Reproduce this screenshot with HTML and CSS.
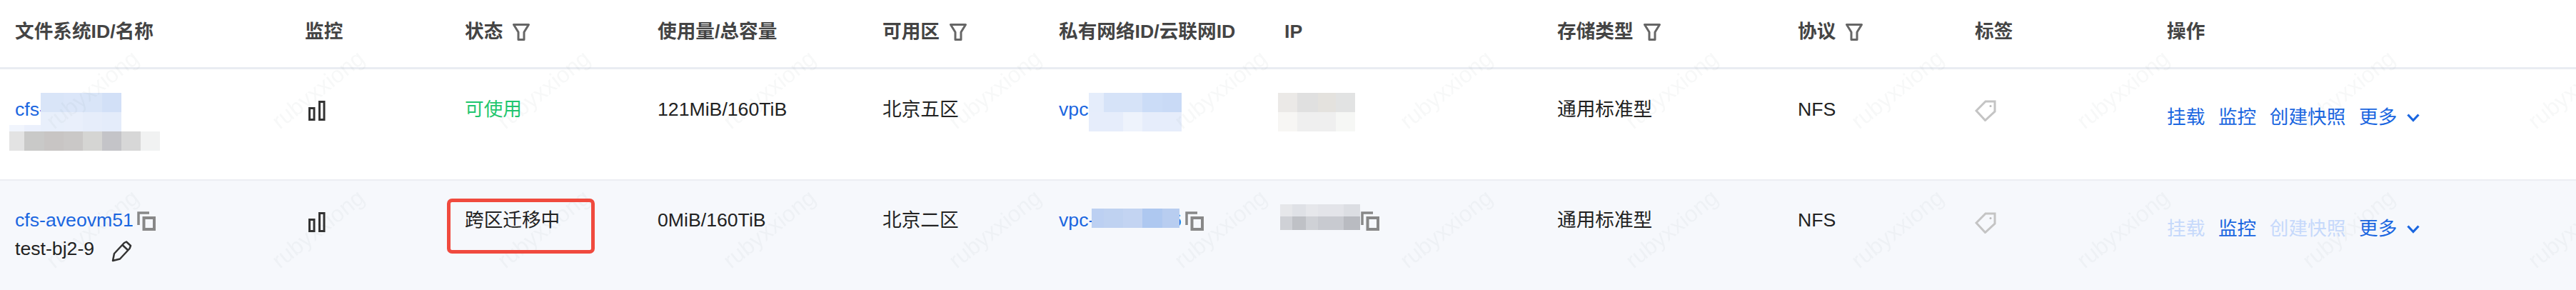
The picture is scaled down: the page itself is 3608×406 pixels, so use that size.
FILE: index.html
```html
<!DOCTYPE html>
<html lang="zh-CN">
<head>
<meta charset="utf-8">
<title>文件系统</title>
<link rel="stylesheet" href="styles.css">
</head>
<body>
<svg width="0" height="0" class="defs" aria-hidden="true">
  <defs>
    <symbol id="i-filter" viewBox="0 0 24 24"><path d="M1.5 1.5H22.5L16 12V22.5H8V12Z" fill="none" stroke="#666" stroke-width="3" stroke-linejoin="round"/></symbol>
    <symbol id="i-bars" viewBox="0 0 24 28"><rect x="1.5" y="10.5" width="6.5" height="16" fill="none" stroke="#333" stroke-width="3"/><rect x="15.5" y="1.5" width="6.5" height="25" fill="none" stroke="#333" stroke-width="3"/></symbol>
    <symbol id="i-copy" viewBox="0 0 26 27"><path d="M17 2H2V19" fill="none" stroke="#888" stroke-width="3.5"/><rect x="9.5" y="9" width="14.5" height="16" fill="none" stroke="#888" stroke-width="4"/></symbol>
    <symbol id="i-tag" viewBox="0 0 30 30"><path d="M15 2H28V16L14.500 28.500L2 15Z" fill="none" stroke="#c4c4c4" stroke-width="3" stroke-linejoin="miter"/><circle cx="22" cy="8.500" r="1.500" fill="#bbb"/></symbol>
    <symbol id="i-pencil" viewBox="0 0 29 30"><path d="M2 28L4 18L18 3L21 1.500L27 7L25.500 11L12 25.500Z M15.500 6L23.500 13.500" fill="none" stroke="#333" stroke-width="2.500" stroke-linejoin="round"/></symbol>
    <symbol id="i-chevron" viewBox="0 0 18 12"><path d="M1.500 1.500L9 9.500L16.500 1.500" fill="none" stroke="#1a66e0" stroke-width="3.200"/></symbol>
  </defs>
</svg>

<main class="table">
  <div class="row head">
    <div class="cell">文件系统ID/名称</div>
    <div class="cell">监控</div>
    <div class="cell with-icon">状态<svg class="filter"><use href="#i-filter"/></svg></div>
    <div class="cell">使用量/总容量</div>
    <div class="cell with-icon">可用区<svg class="filter"><use href="#i-filter"/></svg></div>
    <div class="cell">私有网络ID/云联网ID</div>
    <div class="cell">IP</div>
    <div class="cell with-icon">存储类型<svg class="filter"><use href="#i-filter"/></svg></div>
    <div class="cell with-icon">协议<svg class="filter"><use href="#i-filter"/></svg></div>
    <div class="cell">标签</div>
    <div class="cell">操作</div>
  </div>

  <div class="row body top-row">
    <div class="cell"><a class="link">cfs-</a></div>
    <div class="cell icon-cell"><svg class="bars"><use href="#i-bars"/></svg></div>
    <div class="cell ok">可使用</div>
    <div class="cell">121MiB/160TiB</div>
    <div class="cell">北京五区</div>
    <div class="cell"><a class="link">vpc-</a></div>
    <div class="cell"></div>
    <div class="cell">通用标准型</div>
    <div class="cell">NFS</div>
    <div class="cell tag-cell"><svg class="tag"><use href="#i-tag"/></svg></div>
    <div class="cell actions">
      <a class="link">挂载</a><a class="link">监控</a><a class="link">创建快照</a><a class="link more">更多<svg class="chevron"><use href="#i-chevron"/></svg></a>
    </div>
  </div>

  <div class="row body alt">
    <div class="cell">
      <div class="line"><a class="link">cfs-aveovm51</a><svg class="copy first"><use href="#i-copy"/></svg></div>
      <div class="line">test-bj2-9<svg class="pencil"><use href="#i-pencil"/></svg></div>
    </div>
    <div class="cell icon-cell"><svg class="bars"><use href="#i-bars"/></svg></div>
    <div class="cell">跨区迁移中</div>
    <div class="cell">0MiB/160TiB</div>
    <div class="cell">北京二区</div>
    <div class="cell"><div class="line"><a class="link">vpc-xxxxxxxx6</a><svg class="copy"><use href="#i-copy"/></svg></div></div>
    <div class="cell"><div class="line ip-line"><svg class="copy"><use href="#i-copy"/></svg></div></div>
    <div class="cell">通用标准型</div>
    <div class="cell">NFS</div>
    <div class="cell tag-cell"><svg class="tag"><use href="#i-tag"/></svg></div>
    <div class="cell actions">
      <a class="link off">挂载</a><a class="link">监控</a><a class="link off">创建快照</a><a class="link more">更多<svg class="chevron"><use href="#i-chevron"/></svg></a>
    </div>
  </div>
</main>

<svg class="mosaic" width="3608" height="406" aria-hidden="true" shape-rendering="crispEdges">
  <!-- row 1 name -->
  <rect x="13" y="175" width="21" height="9" fill="#f1f5fd"/><rect x="34" y="175" width="23" height="9" fill="#ebf0fc"/>
  <rect x="57" y="130" width="32" height="27" fill="#d9e5f8"/><rect x="89" y="130" width="27" height="27" fill="#dbe6f9"/><rect x="116" y="130" width="27" height="27" fill="#d9e5f8"/><rect x="143" y="130" width="27" height="27" fill="#d2e0f7"/>
  <rect x="57" y="157" width="32" height="27" fill="#e8effb"/><rect x="89" y="157" width="27" height="27" fill="#e9effb"/><rect x="116" y="157" width="27" height="27" fill="#e6edfa"/><rect x="143" y="157" width="27" height="27" fill="#e4ecfa"/>
  <rect x="13" y="184" width="21" height="27" fill="#e3e3e3"/><rect x="34" y="184" width="28" height="27" fill="#c9c9c8"/><rect x="62" y="184" width="27" height="27" fill="#c8c5c4"/><rect x="89" y="184" width="27" height="27" fill="#cac8c7"/><rect x="116" y="184" width="27" height="27" fill="#d5d5d3"/><rect x="143" y="184" width="27" height="27" fill="#c4c4c8"/><rect x="170" y="184" width="27" height="27" fill="#d7d7d7"/><rect x="197" y="184" width="27" height="27" fill="#f1f2f2"/>
  <!-- row 1 vpc -->
  <rect x="1525" y="130" width="21" height="27" fill="#e5edfb"/><rect x="1546" y="130" width="54" height="27" fill="#d6e3f8"/><rect x="1600" y="130" width="28" height="27" fill="#cbdcf7"/><rect x="1628" y="130" width="27" height="27" fill="#c9daf6"/>
  <rect x="1525" y="157" width="48" height="27" fill="#e6edfb"/><rect x="1573" y="157" width="27" height="27" fill="#eef3fc"/><rect x="1600" y="157" width="55" height="27" fill="#e6edfb"/>
  <!-- row 1 ip -->
  <rect x="1790" y="130" width="27" height="27" fill="#ebe9e7"/><rect x="1817" y="130" width="29" height="27" fill="#e0e0e0"/><rect x="1846" y="130" width="25" height="27" fill="#e4e2de"/><rect x="1871" y="130" width="27" height="27" fill="#e2e3e3"/>
  <rect x="1790" y="157" width="27" height="27" fill="#f7f6f4"/><rect x="1817" y="157" width="54" height="27" fill="#efefef"/><rect x="1871" y="157" width="27" height="27" fill="#f6f7f5"/>
  <!-- row 2 vpc -->
  <rect x="1529" y="292" width="17" height="27" fill="#bcd0f2"/><rect x="1546" y="292" width="27" height="27" fill="#bfd2f1"/><rect x="1573" y="292" width="27" height="27" fill="#c3d4f2"/><rect x="1600" y="292" width="28" height="27" fill="#aec8f0"/><rect x="1628" y="292" width="24" height="27" fill="#b8cdf0"/>
  <!-- row 2 ip -->
  <rect x="1793" y="286" width="17" height="17" fill="#e6e7ea"/><rect x="1810" y="286" width="19" height="17" fill="#dfe1e6"/><rect x="1829" y="286" width="17" height="17" fill="#e6e7eb"/><rect x="1846" y="286" width="36" height="17" fill="#e3e4e9"/><rect x="1882" y="286" width="23" height="17" fill="#dcdee3"/>
  <rect x="1793" y="303" width="17" height="19" fill="#cfd1d6"/><rect x="1810" y="303" width="19" height="19" fill="#bfc1c6"/><rect x="1829" y="303" width="17" height="19" fill="#cfd1d6"/><rect x="1846" y="303" width="36" height="19" fill="#c8cad0"/><rect x="1882" y="303" width="23" height="19" fill="#b9bbc1"/>
</svg>

<svg class="watermark" width="3608" height="406" aria-hidden="true">
  <defs>
    <pattern id="wm" x="-28" y="29" width="316" height="195" patternUnits="userSpaceOnUse">
      <text class="wm-text" x="158" y="107" text-anchor="middle" transform="rotate(-38.500 158 97)">rubyxxiong</text>
    </pattern>
  </defs>
  <rect width="3608" height="406" fill="url(#wm)"/>
</svg>

<div class="callout"></div>
</body>
</html>
```

FILE: styles.css
```css
* { box-sizing: border-box; }
html, body { margin: 0; padding: 0; background: #fff; }
body {
  position: relative;
  width: 3608px;
  height: 406px;
  overflow: hidden;
  font-family: "Liberation Sans", "Noto Sans CJK SC", sans-serif;
  font-size: 26.67px;
  line-height: 40px;
  color: #222;
}
.defs { position: absolute; }

.table { display: flex; flex-direction: column; height: 406px; }
.row {
  display: grid;
  grid-template-columns: 406px 224px 270px 315px 247px 316px 382px 337px 248px 269px 1fr;
  padding-left: 21px;
}
.head {
  height: 97px;
  padding-top: 24px;
  border-bottom: 3px solid #e9ecf2;
  font-weight: 700;
  color: #444;
}
.body { height: 156px; padding-top: 35px; border-bottom: 2px solid #eceef3; }
.alt { flex: 1; border-bottom: 0; background: #f6f8fc; }

.cell { min-width: 0; white-space: nowrap; }
.with-icon { display: flex; align-items: center; height: 40px; gap: 14px; }
.line { display: flex; align-items: flex-start; height: 40px; }
.link { color: #1a66e0; text-decoration: none; }
.ok { color: #1fc66e; }
.off { color: #c6d9fb; }

.filter { width: 24px; height: 24px; margin-top: 2px; }
.icon-cell { padding-top: 9px; padding-left: 5px; line-height: 0; }
.bars { width: 24px; height: 28px; display: block; }
.tag-cell { padding-top: 9px; line-height: 0; }
.tag { width: 30px; height: 30px; display: block; }
.copy { width: 26px; height: 27px; margin-top: 8px; margin-left: 5px; flex: none; }
.ip-line { padding-left: 102px; }
.pencil { width: 29px; height: 30px; margin-top: 9px; margin-left: 24px; flex: none; }

.actions { display: flex; gap: 18.6px; padding-top: 12px; }
.more { display: flex; align-items: flex-start; }
.chevron { width: 18px; height: 12px; margin-top: 15px; margin-left: 14px; }

.top-row { padding-top: 36px; }
.top-row .icon-cell { padding-top: 8px; }
.top-row .tag-cell { padding-top: 7px; }
.top-row .actions { padding-top: 11px; }

.mosaic, .watermark { position: absolute; left: 0; top: 0; pointer-events: none; }
.wm-text { font-size: 32px; fill: rgba(40, 50, 70, 0.035); font-family: "Liberation Sans", sans-serif; }

.callout {
  position: absolute;
  left: 626px;
  top: 278px;
  width: 207px;
  height: 77px;
  border: 5px solid #f04a3e;
  border-radius: 7px;
}
```
